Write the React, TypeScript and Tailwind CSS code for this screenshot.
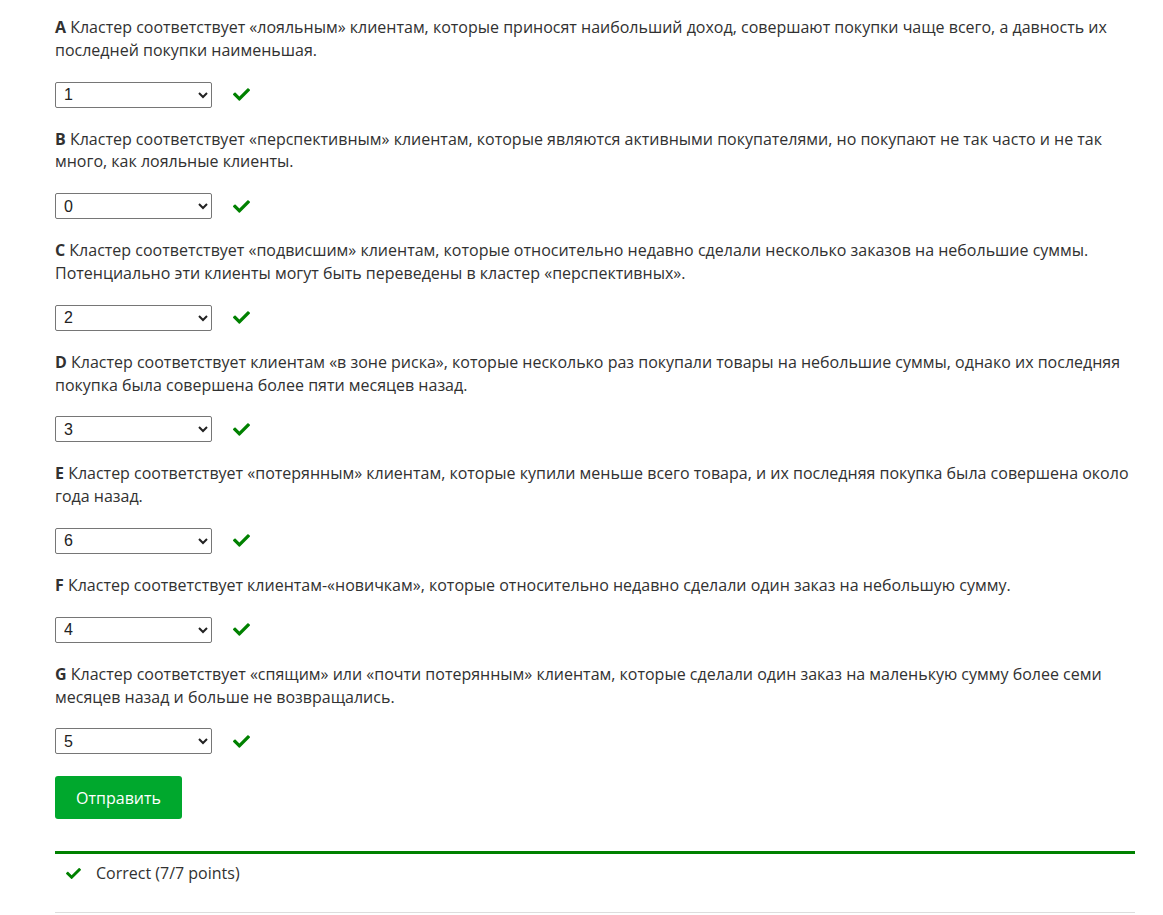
import React from "react";
import { FaCheck } from "react-icons/fa";

const items = [
  { l: "A", t: "Кластер соответствует «лояльным» клиентам, которые приносят наибольший доход, совершают покупки чаще всего, а давность их последней покупки наименьшая.", v: "1" },
  { l: "B", t: "Кластер соответствует «перспективным» клиентам, которые являются активными покупателями, но покупают не так часто и не так много, как лояльные клиенты.", v: "0" },
  { l: "C", t: "Кластер соответствует «подвисшим» клиентам, которые относительно недавно сделали несколько заказов на небольшие суммы. Потенциально эти клиенты могут быть переведены в кластер «перспективных».", v: "2" },
  { l: "D", t: "Кластер соответствует клиентам «в зоне риска», которые несколько раз покупали товары на небольшие суммы, однако их последняя покупка была совершена более пяти месяцев назад.", v: "3" },
  { l: "E", t: "Кластер соответствует «потерянным» клиентам, которые купили меньше всего товара, и их последняя покупка была совершена около года назад.", v: "6" },
  { l: "F", t: "Кластер соответствует клиентам-«новичкам», которые относительно недавно сделали один заказ на небольшую сумму.", v: "4" },
  { l: "G", t: "Кластер соответствует «спящим» или «почти потерянным» клиентам, которые сделали один заказ на маленькую сумму более семи месяцев назад и больше не возвращались.", v: "5" },
];

export default function App() {
  return (
    <div className="bg-white w-[1163px] h-[915px] overflow-hidden text-[#313131] font-['Open_Sans',sans-serif] text-[16px]">
      <div className="ml-[55px] w-[1080px] pt-[16px]">
        {items.map((it) => (
          <div key={it.l} className="mb-[20px]">
            <p className="leading-[22.8px] mb-[20px]">
              <b className="font-bold">{it.l}</b> {it.t}
            </p>
            <div className="flex items-center h-[26px]">
              <select
                defaultValue={it.v}
                className="w-[157px] h-[26px] border border-[#767676] rounded-[2px] bg-white pl-[4px] text-[16px] text-[#222] font-['Liberation_Sans',Arial,sans-serif] appearance-auto"
              >
                {["0", "1", "2", "3", "4", "5", "6"].map((o) => (
                  <option key={o} value={o}>{o}</option>
                ))}
              </select>
              <FaCheck className="ml-[21px] text-[#008100] w-[17px] h-[17px]" />
            </div>
          </div>
        ))}
        <button className="mt-[2px] h-[43px] w-[127px] bg-[#00a82d] text-white rounded-[3px] text-[16px] leading-none">
          Отправить
        </button>
        <div className="mt-[32px] border-t-[3px] border-[#008100]">
          <div className="flex items-center h-[38px] border-b border-[#dddddd] pb-[20px] box-content">
            <FaCheck className="ml-[11px] text-[#008100] w-[15px] h-[15px]" />
            <span className="ml-[15px] leading-[23px]">Correct (7/7 points)</span>
          </div>
        </div>
      </div>
    </div>
  );
}
